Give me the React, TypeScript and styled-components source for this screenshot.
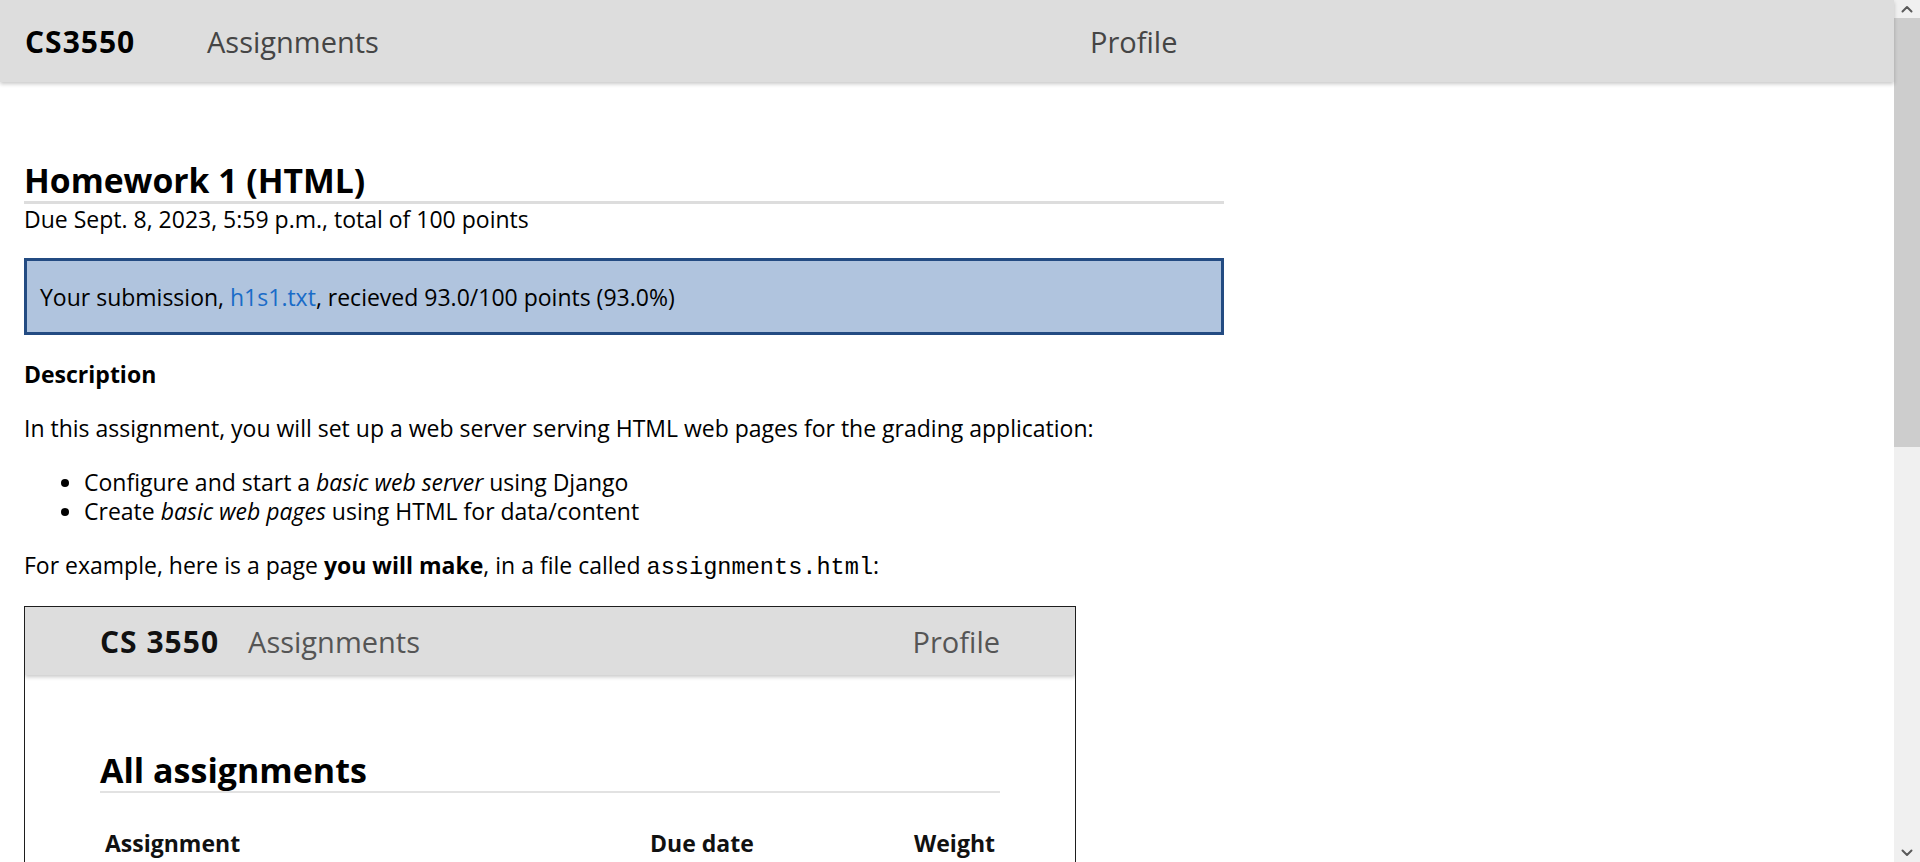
import React from "react";
import styled, { createGlobalStyle } from "styled-components";

const GlobalStyle = createGlobalStyle`
  body {
    margin: 0;
    background: #ffffff;
    color: #000000;
    font-family: "Open Sans", "Noto Sans", "Liberation Sans", sans-serif;
  }
`;

const Shell = styled.div`
  display: flex;
  align-items: flex-start;
`;

const Page = styled.div`
  flex: 1;
  min-width: 0;
  min-height: 1660px;
`;

const Rail = styled.div`
  position: sticky;
  top: 0;
  width: 26px;
  height: 100vh;
  flex: none;
  display: flex;
  flex-direction: column;
  background: #f0f0f0;
`;

const RailButton = styled.div`
  height: 18px;
  flex: none;
  display: flex;
  align-items: center;
  justify-content: center;
  color: #5a5a5a;
`;

const RailThumb = styled.div`
  height: 429px;
  flex: none;
  background: #cdcdcd;
`;

const RailTrack = styled.div`
  flex: 1;
`;

const Chevron = ({ up }: { up?: boolean }) => (
  <svg width="12" height="8" viewBox="0 0 12 8">
    <path
      d={up ? "M1.5 6.5 L6 2 L10.5 6.5" : "M1.5 1.5 L6 6 L10.5 1.5"}
      fill="none"
      stroke="currentColor"
      strokeWidth="2"
      strokeLinecap="round"
      strokeLinejoin="round"
    />
  </svg>
);

const TopBar = styled.header`
  position: relative;
  z-index: 1;
  height: 82px;
  box-sizing: border-box;
  padding-left: 25px;
  background: #dddddd;
  box-shadow: 0 2px 4px rgba(0, 0, 0, 0.22);
  display: grid;
  grid-template-columns: 182px 883px auto;
  align-items: center;
  font-size: 29px;
`;

const Brand = styled.a`
  font-weight: 700;
  font-size: 30px;
  letter-spacing: 1px;
  color: #000000;
  text-decoration: none;
`;

const NavLink = styled.a`
  color: #454545;
  text-decoration: none;
`;

const Main = styled.main`
  width: 1200px;
  margin-left: 24px;
  padding-top: 78px;
  font-size: 23px;
  line-height: 29px;
`;

const Title = styled.h1`
  margin: 0;
  font-size: 33.7px;
  line-height: 41px;
  font-weight: 700;
  border-bottom: 3px solid #dddddd;
`;

const DueLine = styled.p`
  margin: 1px 0 0;
`;

const Submission = styled.div`
  margin-top: 24px;
  border: 3px solid #234b82;
  background: #b0c4de;
  padding: 22px 13px 20px;
`;

const FileLink = styled.a`
  color: #1a6cc8;
  text-decoration: none;
`;

const SectionTitle = styled.h2`
  margin: 25px 0 0;
  font-size: 23px;
  line-height: 29px;
  font-weight: 700;
`;

const Para = styled.p`
  margin: 25px 0 0;
`;

const List = styled.ul`
  margin: 25px 0 0;
  padding-left: 60px;
`;

const Code = styled.code`
  font-family: "Liberation Mono", "DejaVu Sans Mono", monospace;
  font-size: 23.6px;
  line-height: 1;
`;

const Example = styled.figure`
  margin: 26px 0 0;
  width: 1052px;
  box-sizing: border-box;
  border: 1px solid #1e1e1e;
  overflow: hidden;
`;

const MockBar = styled.div`
  position: relative;
  height: 68px;
  padding: 0 75px;
  background: #dddddd;
  box-shadow: 0 2px 4px rgba(0, 0, 0, 0.22);
  display: flex;
  align-items: center;
  font-size: 29px;
`;

const MockBrand = styled.span`
  font-weight: 700;
  font-size: 30px;
  letter-spacing: 1px;
  color: #111111;
  margin-right: 29px;
`;

const MockNav = styled.span<{ $push?: boolean }>`
  color: #555555;
  margin-left: ${(p) => (p.$push ? "auto" : "0")};
`;

const MockBody = styled.div`
  padding: 74px 75px 60px;
`;

const MockTitle = styled.h2`
  margin: 0;
  font-size: 34px;
  line-height: 42px;
  font-weight: 700;
  border-bottom: 2px solid #e2e2e2;
`;

const MockTable = styled.div`
  margin-top: 36px;
  display: grid;
  grid-template-columns: 545px 255px 100px;
  font-size: 23px;
  line-height: 29px;
`;

const Cell = styled.div<{ $head?: boolean; $right?: boolean }>`
  padding: ${(p) => (p.$head ? "0 5px 8px" : "8px 5px")};
  font-weight: ${(p) => (p.$head ? 700 : 400)};
  text-align: ${(p) => (p.$right ? "right" : "left")};
  color: ${(p) => (p.$head ? "#111111" : "#222222")};
`;

const CellLink = styled.span`
  color: #1a6cc8;
`;

const rows = [
  ["Homework 1 (HTML)", "Sep 8", "100"],
  ["Homework 2 (CSS)", "Sep 22", "100"],
  ["Homework 3 (Forms)", "Oct 6", "100"],
  ["Homework 4 (JavaScript)", "Oct 27", "100"],
  ["Homework 5 (Async)", "Nov 10", "100"],
];

export default function App() {
  return (
    <Shell>
      <GlobalStyle />
      <Page>
        <TopBar>
          <Brand href="#">CS3550</Brand>
          <NavLink href="#">Assignments</NavLink>
          <NavLink href="#">Profile</NavLink>
        </TopBar>
        <Main>
          <Title>Homework 1 (HTML)</Title>
          <DueLine>Due Sept. 8, 2023, 5:59 p.m., total of 100 points</DueLine>
          <Submission>
            Your submission, <FileLink href="#">h1s1.txt</FileLink>, recieved 93.0/100 points (93.0%)
          </Submission>
          <SectionTitle>Description</SectionTitle>
          <Para>
            In this assignment, you will set up a web server serving HTML web pages for the grading application:
          </Para>
          <List>
            <li>
              Configure and start a <em>basic web server</em> using Django
            </li>
            <li>
              Create <em>basic web pages</em> using HTML for data/content
            </li>
          </List>
          <Para>
            For example, here is a page <strong>you will make</strong>, in a file called{" "}
            <Code>assignments.html</Code>:
          </Para>
          <Example>
            <MockBar>
              <MockBrand>CS 3550</MockBrand>
              <MockNav>Assignments</MockNav>
              <MockNav $push>Profile</MockNav>
            </MockBar>
            <MockBody>
              <MockTitle>All assignments</MockTitle>
              <MockTable>
                <Cell $head>Assignment</Cell>
                <Cell $head>Due date</Cell>
                <Cell $head $right>
                  Weight
                </Cell>
                {rows.map((r) => (
                  <React.Fragment key={r[0]}>
                    <Cell>
                      <CellLink>{r[0]}</CellLink>
                    </Cell>
                    <Cell>{r[1]}</Cell>
                    <Cell $right>{r[2]}</Cell>
                  </React.Fragment>
                ))}
              </MockTable>
            </MockBody>
          </Example>
        </Main>
      </Page>
      <Rail>
        <RailButton>
          <Chevron up />
        </RailButton>
        <RailThumb />
        <RailTrack />
        <RailButton>
          <Chevron />
        </RailButton>
      </Rail>
    </Shell>
  );
}
